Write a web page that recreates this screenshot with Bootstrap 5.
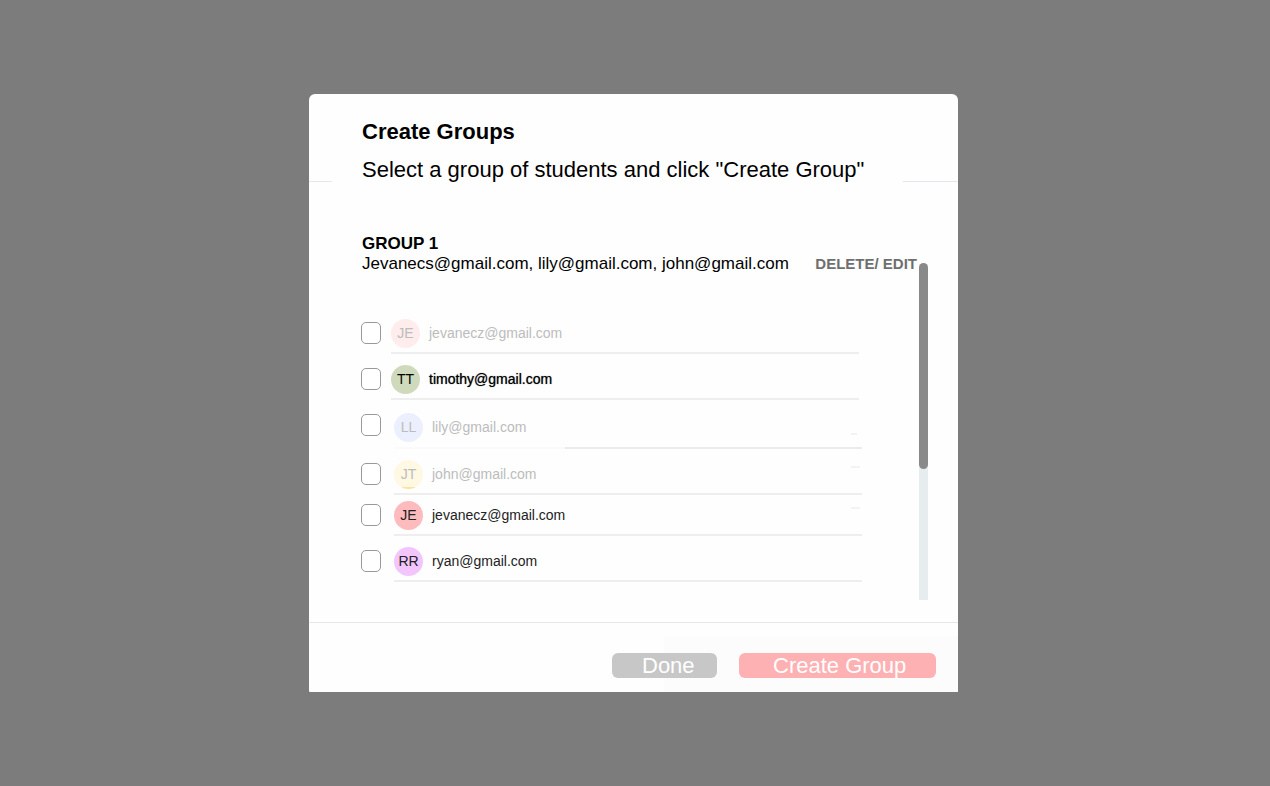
<!DOCTYPE html>
<html lang="en">
<head>
<meta charset="utf-8">
<meta name="viewport" content="width=device-width, initial-scale=1">
<title>Create Groups</title>
<link href="https://cdn.jsdelivr.net/npm/bootstrap@5.3.0/dist/css/bootstrap.min.css" rel="stylesheet">
<style>
  body { background: #7c7c7c; color: #000; font-family: "Liberation Sans", Arial, sans-serif; padding-right: 3px; }
  .group-dialog { width: 100%; max-width: 649px; background: #fefefe; border-radius: 6px 6px 1px 1px; overflow: hidden; }
  .rule { height: 1px; background: #e4e8ec; }
  .rule-start { width: 23px; }
  .rule-end { width: 55px; }
  .heading { padding: 25px 0 0 30px; }
  .heading h1, .heading p { font-size: 22px; line-height: 25px; margin: 0; }
  .heading h1 { font-weight: 700; margin-bottom: 13px; }
  .dialog-main { padding: 52px 30px 22px 52px; }
  .group-info { font-size: 17px; line-height: 20px; padding: 0 2px 0 1px; margin-bottom: 34px; }
  .group-info h2 { font-size: 17px; line-height: 20px; font-weight: 700; margin: 0; }
  .btn-edit { font-size: 15px; line-height: 20px; font-weight: 700; color: #6f6f6f; }
  .students { padding-bottom: 18px; }
  .student { height: 46px; gap: 10px; padding-right: 60px; }
  .student.tall { height: 49px; }
  .student.short { height: 41px; }
  .student .form-check-input { width: 20px; height: 22px; margin: 0 0 10px; border: 1px solid #999; border-radius: 5px; flex: none; background-color: #fff; }
  .student.tall .form-check-input { margin-bottom: 13px; }
  .student label { height: 35px; gap: 9px; padding-bottom: 4px; border-bottom: 2px solid #eee; font-size: 14px; color: #222; }
  .student.inset label { margin-left: 3px; margin-right: -3px; }
  .student.tall label { border-image: linear-gradient(to right, #fafafa 171px, #ebebeb 171px) 1; height: 36px; padding-bottom: 5px; }
  .student.taken label { color: #bcbcbc; }
  .student.chosen label { color: #000; text-shadow: 0 0 1px #555; }
  .avatar { width: 29px; height: 29px; border-radius: 50%; font-size: 14px; flex: none; overflow: hidden; text-shadow: none; }
  .av-rose { background: #ffecec; }
  .av-green { background: #cfdabd; }
  .av-blue { background: #eceffe; }
  .av-yellow { background: linear-gradient(#fff8e3 27px, #fde3a0 27px); }
  .av-red { background: #febbbe; color: #222; }
  .av-violet { background: #f2c6fd; }
  .dash { width: 9px; height: 2px; background: #f3f3f3; margin-right: 2px; }
  .dash-low { margin-top: 12px; width: 6px; margin-right: 5px; }
  .scroll-track { width: 9px; margin-top: 29px; background: #e7ecef; border-radius: 5px 5px 0 0; }
  .scroll-thumb { height: 206px; background: #898989; border-radius: 5px; }
  .dialog-foot { border-top: 1px solid #e4e8ec; padding: 30px 22px 14px; gap: 22px; background: linear-gradient(#fcfcfc, #fcfcfc) right bottom / 294px 56px no-repeat; }
  .btn-foot { height: 25px; font-size: 22px; line-height: 25px; padding: 0; border: 0; border-radius: 6px; color: #fff; text-align: left; }
  .btn-foot:hover { color: #fff; }
  .btn-done { width: 105px; padding-left: 30px; background: #c7c7c7; }
  .btn-create { width: 197px; padding-left: 34px; background: #feb1b3; }
</style>
</head>
<body class="d-flex align-items-center justify-content-center min-vh-100">
<form class="group-dialog" role="dialog" aria-labelledby="dialog-title">
  <header class="d-flex align-items-end">
    <div class="rule rule-start"></div>
    <div class="heading flex-grow-1">
      <h1 id="dialog-title">Create Groups</h1>
      <p>Select a group of students and click "Create Group"</p>
    </div>
    <div class="rule rule-end"></div>
  </header>

  <main class="dialog-main d-flex">
    <div class="flex-grow-1">
      <section class="group-info">
        <h2>GROUP 1</h2>
        <div class="d-flex justify-content-between">
          <span>Jevanecs@gmail.com, lily@gmail.com, john@gmail.com</span>
          <button type="button" class="btn-edit border-0 bg-transparent p-0 text-nowrap">DELETE/ EDIT</button>
        </div>
      </section>

      <div class="students">
        <div class="student taken d-flex align-items-end">
          <input class="form-check-input" type="checkbox" id="s1">
          <label for="s1" class="d-flex flex-grow-1 align-items-center"><span class="avatar av-rose d-flex align-items-center justify-content-center">JE</span><span>jevanecz@gmail.com</span></label>
        </div>
        <div class="student chosen d-flex align-items-end">
          <input class="form-check-input" type="checkbox" id="s2">
          <label for="s2" class="d-flex flex-grow-1 align-items-center"><span class="avatar av-green d-flex align-items-center justify-content-center">TT</span><span>timothy@gmail.com</span></label>
        </div>
        <div class="student taken tall inset d-flex align-items-end">
          <input class="form-check-input" type="checkbox" id="s3">
          <label for="s3" class="d-flex flex-grow-1 align-items-center"><span class="avatar av-blue d-flex align-items-center justify-content-center">LL</span><span>lily@gmail.com</span><span class="dash dash-low ms-auto"></span></label>
        </div>
        <div class="student taken inset d-flex align-items-end">
          <input class="form-check-input" type="checkbox" id="s4">
          <label for="s4" class="d-flex flex-grow-1 align-items-center"><span class="avatar av-yellow d-flex align-items-center justify-content-center">JT</span><span>john@gmail.com</span><span class="dash ms-auto mb-3"></span></label>
        </div>
        <div class="student short inset d-flex align-items-end">
          <input class="form-check-input" type="checkbox" id="s5">
          <label for="s5" class="d-flex flex-grow-1 align-items-center"><span class="avatar av-red d-flex align-items-center justify-content-center">JE</span><span>jevanecz@gmail.com</span><span class="dash ms-auto mb-3"></span></label>
        </div>
        <div class="student inset d-flex align-items-end">
          <input class="form-check-input" type="checkbox" id="s6">
          <label for="s6" class="d-flex flex-grow-1 align-items-center"><span class="avatar av-violet d-flex align-items-center justify-content-center">RR</span><span>ryan@gmail.com</span></label>
        </div>
      </div>
    </div>
    <div class="scroll-track"><div class="scroll-thumb"></div></div>
  </main>

  <footer class="dialog-foot d-flex justify-content-end">
    <button type="button" class="btn btn-foot btn-done">Done</button>
    <button type="submit" class="btn btn-foot btn-create">Create Group</button>
  </footer>
</form>
<script src="https://cdn.jsdelivr.net/npm/bootstrap@5.3.0/dist/js/bootstrap.bundle.min.js"></script>
</body>
</html>
